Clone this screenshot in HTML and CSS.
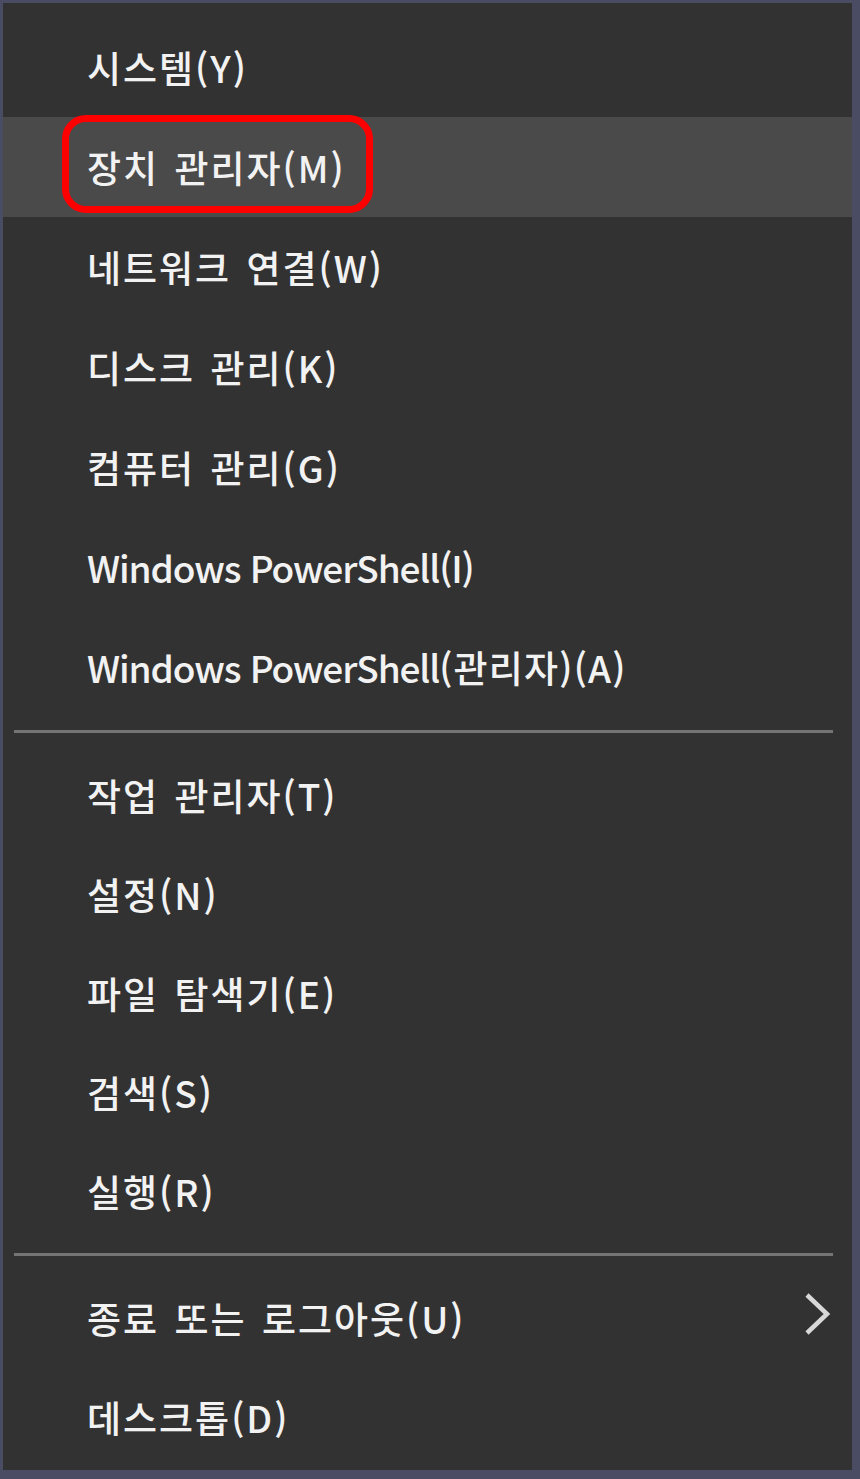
FILE: index.html
```html
<!DOCTYPE html>
<html lang="ko">
<head>
<meta charset="utf-8">
<link rel="stylesheet" href="styles.css">
</head>
<body>
<div class="menu">
  <div class="group g1">
    <div class="item">시스템(Y)</div>
    <div class="item hover"><span class="mark">장치 관리자(M)</span></div>
    <div class="item">네트워크 연결(W)</div>
    <div class="item">디스크 관리(K)</div>
    <div class="item">컴퓨터 관리(G)</div>
    <div class="item latin">Windows PowerShell(I)</div>
    <div class="item latin">Windows PowerShell<span class="ko">(관리자)(A)</span></div>
  </div>
  <div class="sep"></div>
  <div class="group g2">
    <div class="item">작업 관리자(T)</div>
    <div class="item">설정(N)</div>
    <div class="item">파일 탐색기(E)</div>
    <div class="item">검색(S)</div>
    <div class="item">실행(R)</div>
  </div>
  <div class="sep"></div>
  <div class="group g2">
    <div class="item sub"><span>종료 또는 로그아웃(U)</span><svg class="chev" width="34" height="48" viewBox="0 0 34 48"><path d="M7 5 L27 24 L7 43" fill="none" stroke="#d8d8d8" stroke-width="4.5"/></svg></div>
    <div class="item">데스크톱(D)</div>
  </div>
</div>
</body>
</html>
```
FILE: styles.css
```css
html, body {
  margin: 0;
  padding: 0;
  background: #4a4c64;
}
.menu {
  box-sizing: border-box;
  width: 860px;
  height: 1479px;
  background: #323232;
  border-style: solid;
  border-color: #4a4c64;
  border-width: 3px 8px 9px 3px;
  padding: 14px 0 0 0;
  font-family: "Noto Sans CJK KR", "Noto Sans", sans-serif;
  font-size: 37px;
  font-weight: 500;
  color: #f2f2f2;
}
.item {
  height: 100px;
  display: flex;
  align-items: center;
  padding-left: 84px;
  letter-spacing: 2px;
  word-spacing: 3px;
  white-space: nowrap;
  position: relative;
}
.item.latin {
  letter-spacing: -1.1px;
  word-spacing: 0;
}
.item.latin .ko {
  letter-spacing: 1.2px;
}
.g2 .item {
  height: 99px;
}
.item.hover {
  background: #4a4a4a;
}
.mark {
  position: relative;
}
.mark::after {
  content: "";
  position: absolute;
  box-sizing: border-box;
  left: -25px;
  right: -27px;
  top: calc(50% - 52px);
  height: 98px;
  border: 7px solid #ff0000;
  border-radius: 24px;
}
.sep {
  height: 28px;
  display: flex;
  align-items: center;
  padding: 0 19px 0 11px;
}
.sep::before {
  content: "";
  flex: 1;
  height: 3px;
  background: #747474;
}
.chev {
  position: absolute;
  right: 18px;
  top: 22px;
}
```
